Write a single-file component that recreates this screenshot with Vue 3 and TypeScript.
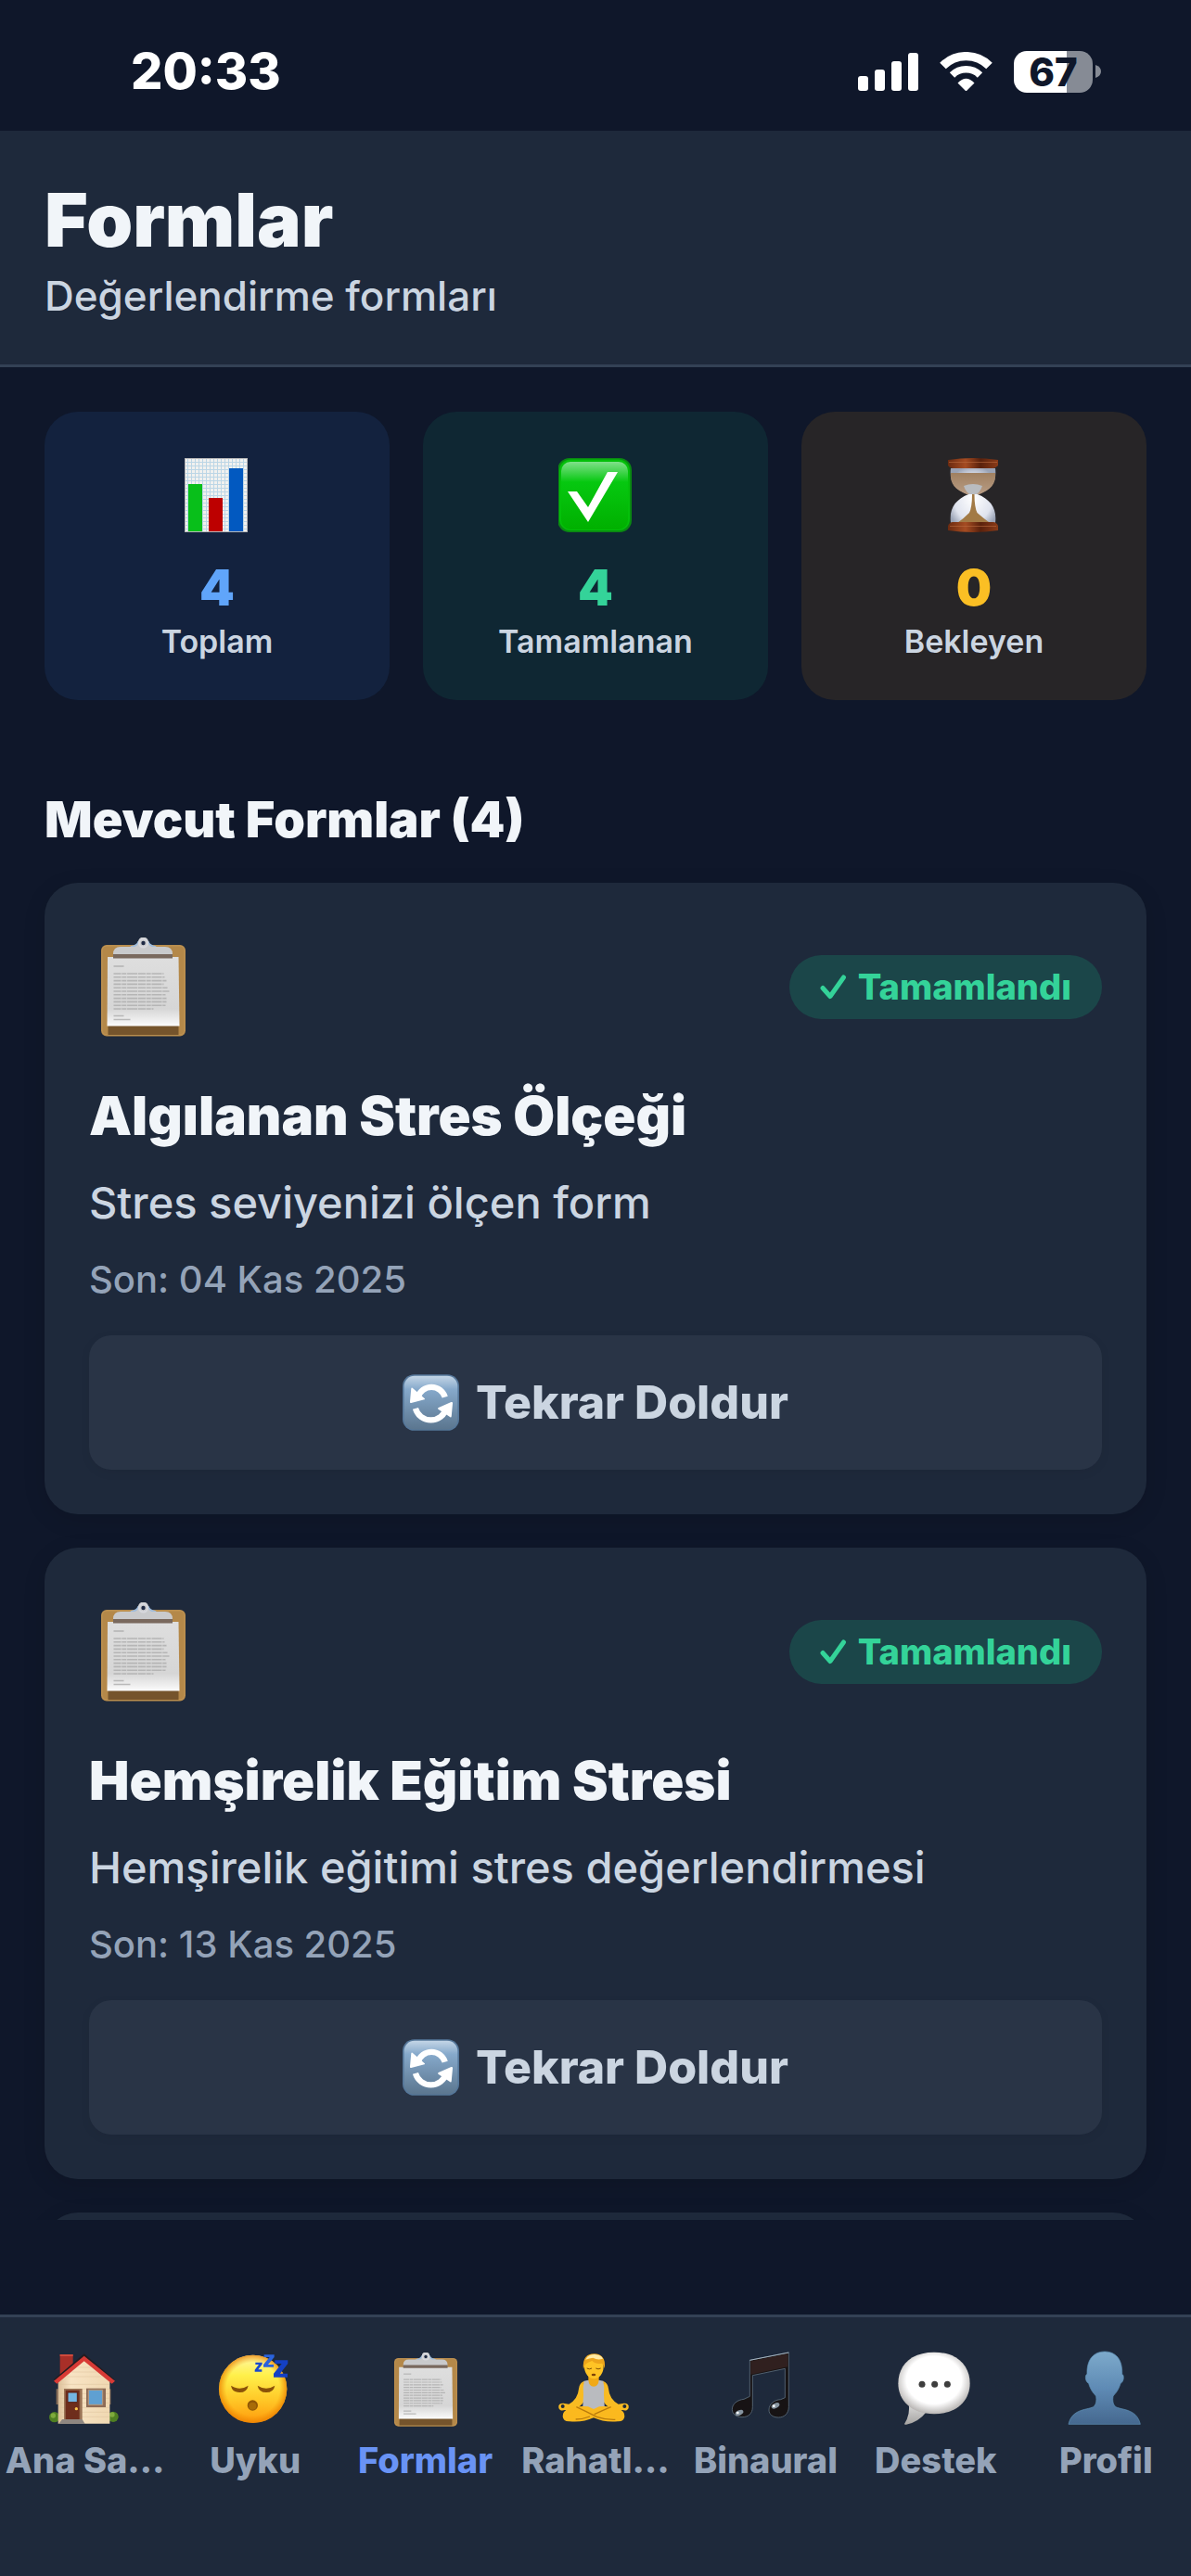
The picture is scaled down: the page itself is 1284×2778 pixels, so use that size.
<script setup lang="ts">
interface Stat {
  icon: string
  value: number
  label: string
  tone: string
}

interface FormItem {
  title: string
  description: string
  last: string
}

interface Tab {
  label: string
  icon: string
  active?: boolean
}

const stats: Stat[] = [
  { icon: 'chart', value: 4, label: 'Toplam', tone: 'blue' },
  { icon: 'done', value: 4, label: 'Tamamlanan', tone: 'green' },
  { icon: 'hourglass', value: 0, label: 'Bekleyen', tone: 'amber' },
]

const forms: FormItem[] = [
  { title: 'Algılanan Stres Ölçeği', description: 'Stres seviyenizi ölçen form', last: '04 Kas 2025' },
  { title: 'Hemşirelik Eğitim Stresi', description: 'Hemşirelik eğitimi stres değerlendirmesi', last: '13 Kas 2025' },
]

const tabs: Tab[] = [
  { label: 'Ana Sa…', icon: 'house' },
  { label: 'Uyku', icon: 'sleep' },
  { label: 'Formlar', icon: 'clipboard', active: true },
  { label: 'Rahatl…', icon: 'lotus' },
  { label: 'Binaural', icon: 'music' },
  { label: 'Destek', icon: 'chat' },
  { label: 'Profil', icon: 'person' },
]
</script>

<template>
  <div class="app">
    <svg class="defs" width="0" height="0" aria-hidden="true">
      <defs>
        <linearGradient id="gGreen" x1="0" y1="0" x2="0" y2="1">
          <stop offset="0" stop-color="#7fe08a" />
          <stop offset="0.3" stop-color="#06c810" />
          <stop offset="1" stop-color="#00b000" />
        </linearGradient>
        <linearGradient id="gWood" x1="0" y1="0" x2="1" y2="0">
          <stop offset="0" stop-color="#6b2a10" />
          <stop offset="0.35" stop-color="#a54c22" />
          <stop offset="0.65" stop-color="#5a210c" />
          <stop offset="1" stop-color="#8a3b18" />
        </linearGradient>
        <linearGradient id="gSand" x1="0" y1="0" x2="0" y2="1">
          <stop offset="0" stop-color="#a08060" />
          <stop offset="1" stop-color="#b89c84" />
        </linearGradient>
        <radialGradient id="gGlass" cx="0.5" cy="0.55" r="0.6">
          <stop offset="0" stop-color="#ffffff" />
          <stop offset="0.7" stop-color="#dfe3ee" />
          <stop offset="1" stop-color="#9aa3b5" />
        </radialGradient>
        <linearGradient id="gPaper" x1="0" y1="0" x2="0" y2="1">
          <stop offset="0" stop-color="#dedede" />
          <stop offset="0.75" stop-color="#d6d6d6" />
          <stop offset="1" stop-color="#fbfbfb" />
        </linearGradient>
        <linearGradient id="gKey" x1="0" y1="0" x2="0" y2="1">
          <stop offset="0" stop-color="#c3d5e6" />
          <stop offset="0.25" stop-color="#86a9cb" />
          <stop offset="1" stop-color="#5b768f" />
        </linearGradient>
        <linearGradient id="gWall" x1="0" y1="0" x2="1" y2="0">
          <stop offset="0" stop-color="#dcc09a" />
          <stop offset="0.25" stop-color="#f8e4c4" />
          <stop offset="1" stop-color="#f0d8b2" />
        </linearGradient>
        <linearGradient id="gFace" x1="0" y1="0" x2="0" y2="1">
          <stop offset="0" stop-color="#fff7a8" />
          <stop offset="0.3" stop-color="#fff04a" />
          <stop offset="0.65" stop-color="#ffc928" />
          <stop offset="1" stop-color="#ff9a0c" />
        </linearGradient>
        <radialGradient id="gFaceEdge" cx="0.5" cy="0.5" r="0.5">
          <stop offset="0.78" stop-color="#f08a00" stop-opacity="0" />
          <stop offset="1" stop-color="#e87c00" stop-opacity="0.75" />
        </radialGradient>
        <radialGradient id="gBubble" cx="0.5" cy="0.45" r="0.55">
          <stop offset="0.7" stop-color="#ffffff" />
          <stop offset="1" stop-color="#b9b6b4" />
        </radialGradient>
        <linearGradient id="gTail" x1="0" y1="0" x2="0" y2="1">
          <stop offset="0" stop-color="#dddddd" />
          <stop offset="1" stop-color="#a5a3a1" />
        </linearGradient>
        <linearGradient id="gPerson" x1="0" y1="0" x2="0" y2="1">
          <stop offset="0" stop-color="#7daacb" />
          <stop offset="0.5" stop-color="#5f8bb5" />
          <stop offset="1" stop-color="#45688f" />
        </linearGradient>
        <pattern id="gridLines" width="4" height="4" patternUnits="userSpaceOnUse">
          <rect width="4" height="4" fill="#f1f1ef" />
          <path d="M0 .5H4M.5 0V4" stroke="#bcd6e6" />
        </pattern>
      </defs>

      <symbol id="chart" viewBox="0 0 80 80">
        <rect x="5.500" y=".5" width="67" height="79" fill="url(#gridLines)" stroke="#b9b9b9" />
        <path d="M9 28h15v51H9z" fill="#08bf1a" />
        <path d="M31 43h15v36H31z" fill="#bd0000" />
        <path d="M53 11h15v68H53z" fill="#0259c0" />
      </symbol>

      <symbol id="done" viewBox="1 0 80 80">
        <rect width="80" height="80" rx="13" fill="#0a8a12" />
        <rect x="2" y="1.500" width="76" height="76.500" rx="12" fill="#04c00a" />
        <rect x="4" y="4" width="72" height="73" rx="10" fill="url(#gGreen)" />
        <path d="M11 36h10l12 17 21-38h11L33 69z" fill="#fff" />
      </symbol>

      <symbol id="hourglass" viewBox="0 0 80 80">
        <path d="M15 11h48c2 16-5 23-19 28 14 6 21 15 19 31H15c-2-16 5-25 19-31C20 34 13 27 15 11z" fill="url(#gGlass)" />
        <path d="M15 16h48c1 12-5 18-17 23H32C20 34 14 28 15 16z" fill="url(#gSand)" />
        <path d="M29 30q10-4 20 0-2 6-6 9h-8q-4-3-6-9z" fill="#b9bcc0" />
        <path d="M38 39h2.500q0 14 3 20 8 7 14 11H22q6-4 13-11 3-6 3-20z" fill="#a27a45" />
        <path d="M12 2q27-4 54 0v6q-3 3-5 3H17q-3 0-5-3z" fill="url(#gWood)" />
        <path d="M17 69h44q3 0 5 4v5q-27 4-54 0v-5q2-4 5-4z" fill="url(#gWood)" />
        <path d="M13 4.500h52M14 73.500h50" stroke="#b86a3f" stroke-width="1" opacity=".6" />
      </symbol>

      <symbol id="clipboard" viewBox="0 0 92 107">
        <rect x=".5" y="8" width="91" height="98.500" rx="6" fill="#b48849" />
        <rect x="1.500" y="9" width="89" height="96" rx="5" fill="none" stroke="#c99c5c" opacity=".6" />
        <path d="M8 95h76v10H8z" fill="#75542c" />
        <path d="M7.500 21H84l1 74.500H7z" fill="url(#gPaper)" />
        <path d="M33 9q6-1 7-5h12q1 4 7 5l4 3H29z" fill="#9dbbdc" />
        <path d="M13.500 18q0-8 8-8h15q4-1 4-5a5.500 5.500 0 0 1 11 0q0 4 4 5h14q8 0 8 8v1H13.500z" fill="#c9cacc" />
        <circle cx="46" cy="6" r="4.500" fill="none" stroke="#d8d9de" stroke-width="2" />
        <circle cx="46" cy="6" r="2.200" fill="#1f2a44" />
        <path d="M13.500 18h64v4.500h-64z" fill="#79695e" />
        <g stroke="#adadad" stroke-width="1.600" fill="none" opacity=".8">
          <path d="M14 31h11" />
          <path
            d="M14 39h54M14 42.800h55M14 46.600h57M14 50.400h54M14 54.200h58M14 58h60M14 61.800h56M14 65.600h57M14 69.400h57M14 73.200h56M14 77h43"
            stroke-dasharray="8 .8 5 .8 11 .8"
          />
          <path d="M14 84.500h11M14 88.500h18" />
        </g>
      </symbol>

      <symbol id="refresh" viewBox="42 66 184 183">
        <rect x="42" y="66" width="184" height="183" rx="38" fill="#55779a" />
        <rect x="47" y="71" width="174" height="174" rx="34" fill="url(#gKey)" />
        <path d="M92 140A46 46 0 0 1 180 140" fill="none" stroke="#fff" stroke-width="19" />
        <path d="M84 177A52 52 0 0 0 184 177" fill="none" stroke="#fff" stroke-width="19" />
        <path d="M74 110l40 35q2 3-1 3l-43 11q-4 1-4-3l4-44q1-4 4-2z" fill="#fff" />
        <path d="M197 205l-39-26q-3-3 1-5l41-18q5-1 5 3l-4 44q-1 4-4 2z" fill="#fff" />
      </symbol>

      <symbol id="house" viewBox="149 166 252 252">
        <path d="M193 178h42v40l-42 36z" fill="#a82f28" />
        <path d="M193 178h42v6h-42z" fill="#cf4a3c" />
        <circle cx="175" cy="381" r="17" fill="#4f7f22" />
        <circle cx="365" cy="380" r="17" fill="#4f7f22" />
        <circle cx="171" cy="376" r="8" fill="#7faa3d" />
        <circle cx="362" cy="373" r="8" fill="#7faa3d" />
        <path d="M181 290h6v50h-6zM352 290h5v50h-5z" fill="#8b6d55" />
        <path d="M187 262l84-74 83 74v140H187z" fill="url(#gWall)" />
        <path
          d="M190 275h162M190 290h162M190 305h162M190 320h162M190 335h162M190 350h162M190 365h162M190 380h162M215 250h112M230 235h82M250 220h42"
          stroke="#dcc39c"
          stroke-width="1.500"
        />
        <path d="M271 176l98 83-5 5-93-78-93 78-5-5z" fill="#231c20" />
        <path d="M271 183l100 81-10 9-90-73-88 73-10-9z" fill="#d83a35" />
        <path d="M206 289h59v100h-59z" fill="#9a7355" />
        <path d="M211 294h45v94h-45z" fill="#6e2d1c" />
        <path d="M218 301h31v32h-31z" fill="#74b5e2" stroke="#5a2114" stroke-width="3" />
        <circle cx="246" cy="354" r="5" fill="#ffc54a" />
        <path d="M278 288h63v61h-63z" fill="#8d6c57" />
        <path d="M285 293h46v48h-46z" fill="#5fa0d2" stroke="#b9987a" stroke-width="3" />
        <path d="M200 388h65l9 15h-85z" fill="#8f8781" />
      </symbol>

      <symbol id="sleep" viewBox="699 166 252 252">
        <circle cx="818" cy="290" r="110" fill="url(#gFace)" />
        <circle cx="818" cy="290" r="110" fill="url(#gFaceEdge)" />
        <path d="M747 279q28 18 56 0-4 22-28 22t-28-22zM833 279q28 18 56 0-4 22-28 22t-28-22z" fill="#8a5208" />
        <circle cx="817" cy="343" r="17" fill="#8f5606" />
        <circle cx="817" cy="345" r="12" fill="#a76b08" />
        <g fill="#1a49cf">
          <path d="M826 204h22v6l-13 17h12v7h-23v-6l13-17h-11z" />
          <path d="M854 179h33v8l-20 24h18v8h-33v-8l20-24h-18z" fill="#2a62dc" />
          <path d="M889 197h42v11l-25 32h24v12h-45v-12l26-32h-22z" fill="#1440c4" />
        </g>
      </symbol>

      <symbol id="lotus" viewBox="600 166 252 252">
        <path
          d="M690 264q-16 5-18 25-3 34-32 50l-18-3q-18 0-15 15 4 12 20 7l26 3q34-18 43-46zM750 264q16 5 18 25 3 34 32 50l18-3q18 0 15 15-4 12-20 7l-26 3q-34-18-43-46z"
          fill="#f8bb22"
        />
        <circle cx="620" cy="346" r="6" fill="#1f2a3b" />
        <circle cx="820" cy="346" r="6" fill="#1f2a3b" />
        <path d="M703 240h34v22l20 10q-10 14-37 14t-37-14l20-10z" fill="#f0a916" />
        <path d="M689 264l14-3q2 21 17 21t17-21l14 3q5 22 2 45l3 50h-72l3-50q-3-23 2-45z" fill="#b9bbbf" />
        <path d="M640 353q30-10 62-6l18 8 18-8q32-4 62 6 21 9 20 26-2 17-22 16-44 4-78-12-34 16-78 12-20 1-22-16-1-17 20-26z" fill="#fbb91e" />
        <path d="M664 348q30 14 66 32 28 10 60 9M776 348q-28 12-54 24M662 388q22 0 46-9" fill="none" stroke="#b97a0c" stroke-width="4" />
        <ellipse cx="721" cy="218" rx="31" ry="39" fill="#ffc425" />
        <path d="M687 226q-6-49 35-50 40 2 33 48-3-14-9-17-20 3-31-8-14 4-23 12z" fill="#eda51b" />
        <path d="M694 195q8-18 30-17 22 2 26 14-17 6-32-3-12 2-24 6z" fill="#ffe9a3" />
        <path d="M698 223q8 5 16 0M727 223q8 5 16 0" fill="none" stroke="#7e4e06" stroke-width="3" />
        <ellipse cx="720" cy="244" rx="7" ry="4" fill="#7e4206" />
      </symbol>

      <symbol id="music" viewBox="1150 166 252 252">
        <g stroke="#5b6e7d" stroke-width="2.500" stroke-linejoin="round">
          <path
            d="M1226 197l126-25v176c0 20-13 34-33 34-19 0-31-10-31-24 0-19 16-33 38-34l14-6v-94l-105 22v102c0 22-14 33-34 33-19 0-32-10-32-25 0-18 17-31 38-33l19-9z"
            fill="#171314"
          />
        </g>
        <path d="M1229 200l120-24v42l-120 25z" fill="#30201f" />
        <path d="M1226 197l126-25" stroke="#a5b4c0" stroke-width="3" />
        <ellipse cx="1192" cy="367" rx="14" ry="8" fill="#8694a0" transform="rotate(-25 1192 367)" />
        <ellipse cx="1309" cy="344" rx="14" ry="8" fill="#8694a0" transform="rotate(-25 1309 344)" />
        <circle cx="1187" cy="367" r="4" fill="#fff" />
        <circle cx="1304" cy="345" r="4" fill="#fff" />
      </symbol>

      <symbol id="chat" viewBox="489 166 252 252">
        <path d="M527 335q6 38-14 68 0 3 6 2 40-8 66-42z" fill="url(#gTail)" />
        <path d="M609 171c78 0 116 46 116 101s-42 99-116 99-116-44-116-99 38-101 116-101z" fill="url(#gBubble)" />
        <circle cx="570" cy="275" r="10.500" fill="#3e3e3e" />
        <circle cx="611" cy="275" r="10.500" fill="#3e3e3e" />
        <circle cx="652" cy="275" r="10.500" fill="#3e3e3e" />
      </symbol>

      <symbol id="person" viewBox="1039 166 252 252">
        <path
          d="M1162 169c37 0 58 27 56 73 8 3 6 25-5 30-6 21-15 31-24 41-2 14-1 24 6 33 15 13 70 4 82 58H1045c12-54 67-45 83-58 7-9 8-19 6-33-9-10-18-20-24-41-11-5-13-27-5-30-2-46 20-73 57-73z"
          fill="url(#gPerson)"
          stroke="#5f93b8"
          stroke-width="2"
        />
      </symbol>
    </svg>

    <div class="status">
      <time class="clock">20:33</time>
      <div class="indicators">
        <svg width="65" height="41" viewBox="0 0 65 41" fill="#fff" role="img" aria-label="Sinyal">
          <rect y="25" width="11" height="16" rx="3" />
          <rect x="18" y="18" width="11" height="23" rx="3" />
          <rect x="36" y="9" width="11" height="32" rx="3" />
          <rect x="54" width="11" height="41" rx="3" />
        </svg>
        <svg width="57" height="42" viewBox="0 0 57 42" fill="none" stroke="#fff" role="img" aria-label="Wi-Fi">
          <path d="M3.500 15A35.300 35.300 0 0 1 53.500 15" stroke-width="9.300" />
          <path d="M13.500 25A21.200 21.200 0 0 1 43.500 25" stroke-width="7.600" />
          <path d="M19.500 33.500Q28.500 24 37.500 33.500L29.500 41.500q-1 1-2 0z" fill="#fff" stroke="none" />
        </svg>
        <div class="battery">
          <span class="level">67</span>
          <svg width="6" height="14" viewBox="0 0 6 14" aria-hidden="true"><path d="M0 0q6 2 6 7t-6 7z" fill="#868b95" /></svg>
        </div>
      </div>
    </div>

    <header class="header">
      <h1>Formlar</h1>
      <p>Değerlendirme formları</p>
    </header>

    <main class="content">
      <section class="stats">
        <div v-for="s in stats" :key="s.label" class="stat" :class="s.tone">
          <svg class="stat-icon" aria-hidden="true"><use :href="'#' + s.icon" /></svg>
          <strong>{{ s.value }}</strong>
          <span>{{ s.label }}</span>
        </div>
      </section>

      <h2>Mevcut Formlar (4)</h2>

      <section class="list">
        <article v-for="f in forms" :key="f.title" class="card">
          <div class="card-top">
            <svg class="card-icon" aria-hidden="true"><use href="#clipboard" /></svg>
            <span class="badge">
              <svg width="29" height="27" viewBox="0 0 29 27" aria-hidden="true">
                <path d="M3 14.500l8 9L25.500 3" fill="none" stroke="currentColor" stroke-width="5" stroke-linecap="round" stroke-linejoin="round" />
              </svg>
              Tamamlandı
            </span>
          </div>
          <h3>{{ f.title }}</h3>
          <p class="description">{{ f.description }}</p>
          <p class="last">Son: {{ f.last }}</p>
          <button type="button" class="again">
            <svg class="again-icon" aria-hidden="true"><use href="#refresh" /></svg>
            Tekrar Doldur
          </button>
        </article>
        <article class="card card-next"></article>
      </section>
    </main>

    <nav class="tabs">
      <a v-for="t in tabs" :key="t.label" href="#" class="tab" :class="{ active: t.active }">
        <svg class="tab-icon" :class="t.icon" aria-hidden="true"><use :href="'#' + t.icon" /></svg>
        <span>{{ t.label }}</span>
      </a>
    </nav>
  </div>
</template>

<style>
body {
  margin: 0;
  background: #0f172a;
}
</style>

<style scoped>
* {
  box-sizing: border-box;
}

.app {
  display: flex;
  flex-direction: column;
  height: 100vh;
  background: #0f172a;
  color: #f1f5f9;
  font-family: Inter, 'Liberation Sans', sans-serif;
  font-weight: 500;
}

.defs {
  position: absolute;
}

h1,
h2,
h3,
p {
  margin: 0;
}

.status {
  display: flex;
  align-items: center;
  justify-content: space-between;
  padding: 45px 97px 32px 141px;
}

.clock {
  color: #fff;
  font-size: 54px;
  font-weight: 800;
  line-height: 64px;
}

.indicators {
  display: flex;
  align-items: center;
  gap: 23px;
}

.battery {
  display: flex;
  align-items: center;
  gap: 3px;
}

.level {
  width: 85px;
  border-radius: 14px;
  background: linear-gradient(90deg, #fff 67%, #868b95 67%);
  color: #0f172a;
  font-size: 42px;
  font-weight: 800;
  line-height: 45px;
  text-align: center;
}

.header {
  padding: 48px;
  border-bottom: 3px solid #334155;
  background: #1e293b;
}

h1 {
  font-size: 80px;
  font-weight: 900;
  line-height: 96px;
}

.header p {
  margin-top: 8px;
  color: #cbd5e1;
  font-size: 44px;
  line-height: 52px;
}

.content {
  flex: 1;
  min-height: 0;
  margin-bottom: 102px;
  padding: 48px 48px 0;
  overflow: hidden;
}

.stats {
  display: grid;
  grid-template-columns: repeat(3, 1fr);
  gap: 36px;
}

.stat {
  display: flex;
  flex-direction: column;
  align-items: center;
  padding: 50px 24px 41px;
  border-radius: 36px;
}

.stat-icon {
  width: 80px;
  height: 80px;
  margin-bottom: 28px;
}

.stat strong {
  font-size: 54px;
  font-weight: 900;
  line-height: 64px;
}

.stat span {
  margin-top: 4px;
  color: #cbd5e1;
  font-size: 34px;
  font-weight: 600;
  line-height: 44px;
}

.blue {
  background: #13223e;
}

.green {
  background: #0f2733;
}

.amber {
  background: #272527;
}

.blue strong {
  color: #60a5fa;
}

.green strong {
  color: #34d399;
}

.amber strong {
  color: #fbbf24;
}

h2 {
  margin: 97px 0 36px;
  font-size: 54px;
  font-weight: 900;
  line-height: 64px;
}

.list {
  display: flex;
  flex-direction: column;
  gap: 36px;
}

.card {
  padding: 48px;
  border-radius: 36px;
  background: #1e293b;
  box-shadow: 0 6px 24px rgba(0, 0, 0, 0.12);
}

.card-next {
  min-height: 120px;
}

.card-top {
  display: flex;
  align-items: center;
  justify-content: space-between;
  height: 129px;
}

.card-icon {
  width: 117px;
  height: 107px;
}

.badge {
  display: flex;
  align-items: center;
  gap: 12px;
  padding: 12px 33px;
  border-radius: 36px;
  background: #1b4649;
  color: #34d399;
  font-size: 38px;
  font-weight: 800;
  line-height: 45px;
}

h3 {
  margin-top: 38px;
  font-size: 58px;
  font-weight: 900;
  line-height: 72px;
}

.description {
  margin-top: 28px;
  color: #cbd5e1;
  font-size: 47px;
  line-height: 60px;
}

.last {
  margin: 28px 0 35px;
  color: #94a3b8;
  font-size: 40px;
  line-height: 50px;
}

.again {
  display: flex;
  align-items: center;
  justify-content: center;
  gap: 18px;
  width: 100%;
  padding: 42px 24px;
  border: 0;
  border-radius: 24px;
  background: #293446;
  box-shadow: 0 3px 12px rgba(0, 0, 0, 0.06);
  color: #cbd5e1;
  font-family: inherit;
  font-size: 50px;
  font-weight: 800;
  line-height: 61px;
}

.again-icon {
  width: 61px;
  height: 61px;
}

.tabs {
  display: grid;
  grid-template-columns: repeat(7, 1fr);
  padding: 36px 0 103px;
  border-top: 3px solid #334155;
  background: #1e293b;
}

.tab {
  display: flex;
  flex-direction: column;
  align-items: center;
  gap: 12px;
  color: #94a3b8;
  font-size: 38px;
  font-weight: 800;
  line-height: 44px;
  text-decoration: none;
  white-space: nowrap;
}

.tab.active {
  color: #6993f5;
}

.tab-icon {
  width: 84px;
  height: 84px;
}

.tab-icon.clipboard {
  padding: 2px;
}
</style>
